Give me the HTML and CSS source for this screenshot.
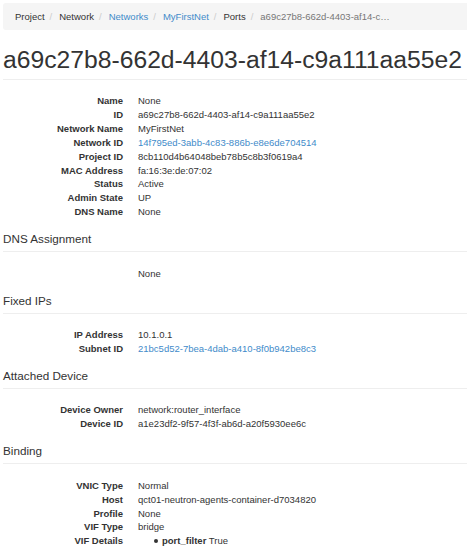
FILE: index.html
```html
<!DOCTYPE html>
<html lang="en">

<head>
    <meta charset="UTF-8">
    <meta name="viewport" content="width=device-width, initial-scale=1.0">
    <title>Port Details</title>
    <link rel="stylesheet" href="styles.css">
</head>

<body>
    <div class="page">
        <ol class="breadcrumb">
            <li>Project</li>
            <li>Network</li>
            <li><a href="#">Networks</a></li>
            <li><a href="#">MyFirstNet</a></li>
            <li>Ports</li>
            <li class="active">a69c27b8-662d-4403-af14-c…</li>
        </ol>

        <h1 class="page-title">a69c27b8-662d-4403-af14-c9a111aa55e2</h1>

        <dl class="details">
            <dt>Name</dt>
            <dd>None</dd>
            <dt>ID</dt>
            <dd>a69c27b8-662d-4403-af14-c9a111aa55e2</dd>
            <dt>Network Name</dt>
            <dd>MyFirstNet</dd>
            <dt>Network ID</dt>
            <dd><a href="#">14f795ed-3abb-4c83-886b-e8e6de704514</a></dd>
            <dt>Project ID</dt>
            <dd>8cb110d4b64048beb78b5c8b3f0619a4</dd>
            <dt>MAC Address</dt>
            <dd>fa:16:3e:de:07:02</dd>
            <dt>Status</dt>
            <dd>Active</dd>
            <dt>Admin State</dt>
            <dd>UP</dd>
            <dt>DNS Name</dt>
            <dd>None</dd>
        </dl>

        <h4 class="section-title">DNS Assignment</h4>
        <dl class="details">
            <dt></dt>
            <dd>None</dd>
        </dl>

        <h4 class="section-title">Fixed IPs</h4>
        <dl class="details">
            <dt>IP Address</dt>
            <dd>10.1.0.1</dd>
            <dt>Subnet ID</dt>
            <dd><a href="#">21bc5d52-7bea-4dab-a410-8f0b942be8c3</a></dd>
        </dl>

        <h4 class="section-title">Attached Device</h4>
        <dl class="details">
            <dt>Device Owner</dt>
            <dd>network:router_interface</dd>
            <dt>Device ID</dt>
            <dd>a1e23df2-9f57-4f3f-ab6d-a20f5930ee6c</dd>
        </dl>

        <h4 class="section-title">Binding</h4>
        <dl class="details">
            <dt>VNIC Type</dt>
            <dd>Normal</dd>
            <dt>Host</dt>
            <dd>qct01-neutron-agents-container-d7034820</dd>
            <dt>Profile</dt>
            <dd>None</dd>
            <dt>VIF Type</dt>
            <dd>bridge</dd>
            <dt>VIF Details</dt>
            <dd>
                <ul class="vif-list">
                    <li><b>port_filter</b> True</li>
                </ul>
            </dd>
        </dl>
    </div>
</body>

</html>
```

FILE: styles.css
```css
body {
    margin: 0;
    padding: 3px 0 0 3px;
    overflow-x: hidden;
    font-family: "Liberation Sans", Arial, sans-serif;
    font-size: 9.5px;
    line-height: 13.9px;
    color: #333;
    background: #fff;
}

a {
    color: #428bca;
    text-decoration: none;
}

.page {
    width: 480px;
}

.breadcrumb {
    list-style: none;
    margin: 0;
    padding: 0 12px;
    height: 27px;
    display: flex;
    align-items: center;
    background: #f5f5f5;
    border-radius: 3px;
    font-size: 9.5px;
}

.breadcrumb li + li::before {
    content: "/";
    color: #ccc;
    padding: 0 7px 0 5px;
}

.breadcrumb .active {
    color: #777;
}

.page-title {
    margin: 16px 0 0;
    padding-bottom: 6px;
    border-bottom: 1px solid #eee;
    font-size: 24.7px;
    font-weight: normal;
    line-height: 27px;
    color: #333;
}

.details {
    margin: 14px 0 0;
    display: grid;
    grid-template-columns: 120px 1fr;
    column-gap: 15px;
}

.details dt {
    font-weight: bold;
    text-align: right;
    min-height: 13.9px;
}

.details dd {
    margin: 0;
}

.section-title {
    margin: 13px 0 0;
    padding-bottom: 6px;
    border-bottom: 1px solid #eee;
    font-size: 11.7px;
    font-weight: normal;
    line-height: 13px;
}

.section-title + .details {
    margin-top: 14.5px;
}

.vif-list {
    margin: 0;
    padding-left: 24px;
    list-style: none;
}

.vif-list li::before {
    content: "";
    display: inline-block;
    width: 4px;
    height: 4px;
    margin: 0 4px 1px -8px;
    border-radius: 50%;
    background: #333;
}
```
